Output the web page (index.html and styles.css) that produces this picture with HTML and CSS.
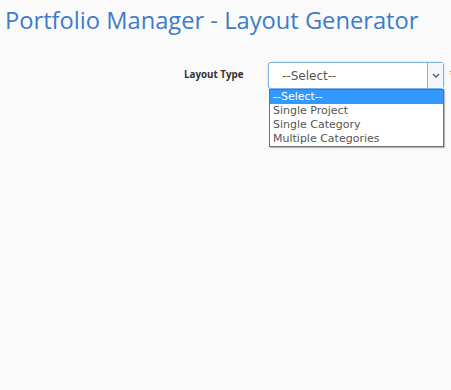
FILE: index.html
```html
<!DOCTYPE html>
<html>
<head>
<meta charset="utf-8">
<link rel="stylesheet" href="styles.css">
</head>
<body>
<h1 class="title">Portfolio Manager - Layout Generator</h1>
<div class="form-row">
  <label class="label">Layout Type</label>
  <div class="select-wrap">
    <div class="select">
      <span class="select-value">--Select--</span>
      <span class="select-arrow">
        <svg width="8" height="5" viewBox="0 0 8 5"><path d="M1 1 L4 4 L7 1" fill="none" stroke="#555" stroke-width="1.3"/></svg>
      </span>
    </div>
    <ul class="listbox">
      <li class="option selected">--Select--</li>
      <li class="option">Single Project</li>
      <li class="option">Single Category</li>
      <li class="option">Multiple Categories</li>
    </ul>
  </div>
  <span class="req">*</span>
</div>
</body>
</html>
```
FILE: styles.css
```css
html, body {
  margin: 0;
  padding: 0;
  background: #fafafa;
  height: 100%;
  overflow: hidden;
}
.title {
  margin: 0;
  padding: 5px 0 0 5px;
  font-family: "Open Sans", sans-serif;
  font-weight: 400;
  font-size: 23.7px;
  line-height: 30px;
  color: #3d7cc9;
  white-space: nowrap;
}
.form-row {
  display: flex;
  align-items: flex-start;
  margin-top: 27px;
  padding-left: 184px;
}
.form-row > * {
  flex-shrink: 0;
}
.label {
  width: 84px;
  font-family: "Open Sans", sans-serif;
  font-weight: 700;
  font-size: 9.8px;
  color: #333;
  line-height: 26px;
}
.select-wrap {
  position: relative;
  width: 176px;
}
.select {
  box-sizing: border-box;
  height: 27px;
  border: 1px solid #7fb3e6;
  border-radius: 3px;
  background: #fff;
  display: flex;
  align-items: center;
  box-shadow: 0 0 2px rgba(102,175,233,0.5);
}
.select-value {
  flex: 1;
  padding-left: 13px;
  font-family: "DejaVu Sans", sans-serif;
  font-size: 12px;
  color: #555;
}
.select-arrow {
  box-sizing: border-box;
  width: 16px;
  height: 25px;
  border-left: 1px solid #7fb3e6;
  display: flex;
  align-items: center;
  justify-content: center;
  background: #f4f8fc;
}
.listbox {
  position: absolute;
  left: 1px;
  top: 27px;
  width: 175px;
  box-sizing: border-box;
  margin: 0;
  padding: 0;
  list-style: none;
  background: #fff;
  border: 1px solid #707070;
  box-shadow: 1px 1px 1px rgba(0,0,0,0.25);
}
.option {
  font-family: "DejaVu Sans", sans-serif;
  font-size: 11px;
  line-height: 14px;
  height: 14px;
  padding-left: 3px;
  color: #555;
}
.option.selected {
  background: #3399ff;
  color: #fff;
}
.req {
  margin-left: 5px;
  margin-top: 4px;
  color: #e8753a;
  font-family: "Open Sans", sans-serif;
  font-size: 12px;
}
```
